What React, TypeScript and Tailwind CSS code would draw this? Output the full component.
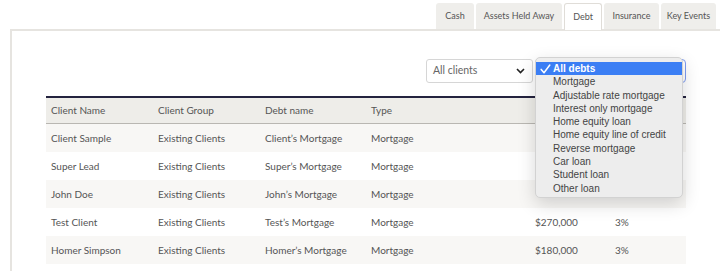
import React from "react";

type Row = {
  name: string;
  group: string;
  debt: string;
  type: string;
  balance: string;
  rate: string;
};

const tabs = [
  { label: "Cash", w: "w-[38px]" },
  { label: "Assets Held Away", w: "w-[86px]" },
  { label: "Debt", w: "w-[38px]" },
  { label: "Insurance", w: "w-[55px]" },
  { label: "Key Events", w: "w-[55px]" },
];

// first rows' amounts sit under the open dropdown in the screenshot
const rows: Row[] = [
  { name: "Client Sample", group: "Existing Clients", debt: "Client’s Mortgage", type: "Mortgage", balance: "", rate: "" },
  { name: "Super Lead", group: "Existing Clients", debt: "Super’s Mortgage", type: "Mortgage", balance: "", rate: "" },
  { name: "John Doe", group: "Existing Clients", debt: "John’s Mortgage", type: "Mortgage", balance: "", rate: "" },
  { name: "Test Client", group: "Existing Clients", debt: "Test’s Mortgage", type: "Mortgage", balance: "$270,000", rate: "3%" },
  { name: "Homer Simpson", group: "Existing Clients", debt: "Homer’s Mortgage", type: "Mortgage", balance: "$180,000", rate: "3%" },
];

const debtTypes = [
  "All debts",
  "Mortgage",
  "Adjustable rate mortgage",
  "Interest only mortgage",
  "Home equity loan",
  "Home equity line of credit",
  "Reverse mortgage",
  "Car loan",
  "Student loan",
  "Other loan",
];

function Chevron() {
  return (
    <svg width="9" height="6" viewBox="0 0 9 6" fill="none">
      <path d="M1 1l3.5 3.5L8 1" stroke="#222" strokeWidth="1.6" />
    </svg>
  );
}

function Check() {
  return (
    <svg width="11" height="10" viewBox="0 0 11 10" fill="none">
      <path d="M1.2 5.4l2.8 3.4L9.8 1" stroke="#fff" strokeWidth="1.5" strokeLinecap="round" strokeLinejoin="round" />
    </svg>
  );
}

function DebtMenu() {
  return (
    <div className="absolute left-[535px] top-[57px] w-[148px] h-[141px] rounded-[5px] border border-[#d2d2d2] bg-[#ededed] pt-[4px] shadow-[0_6px_18px_rgba(0,0,0,0.16)] font-['Liberation_Sans',sans-serif] text-[10px] leading-[13.3px] text-[#444]">
      {debtTypes.map((t, i) =>
        i === 0 ? (
          <div key={t} className="flex items-center h-[13.3px] bg-[#3b7ef4] text-white font-bold">
            <span className="w-[17px] pl-[4px] flex items-center">
              <Check />
            </span>
            <span>{t}</span>
          </div>
        ) : (
          <div key={t} className="h-[13.3px] pl-[17px]">
            {t}
          </div>
        )
      )}
    </div>
  );
}

export default function App() {
  return (
    <div className="relative w-[720px] h-[271px] overflow-hidden bg-white font-['Lato',sans-serif] text-[#555]">
      {/* tab strip */}
      <div className="flex justify-end items-end gap-[2px] pr-[4px] h-[30px]">
        {tabs.map((t) => (
          <div
            key={t.label}
            className={
              t.label === "Debt"
                ? `${t.w} h-[27px] flex items-center justify-center whitespace-nowrap rounded-t-[3px] border border-b-0 border-[#e0ddd8] bg-white text-[9px] text-[#555]`
                : `${t.w} h-[26px] mb-[1px] flex items-center justify-center whitespace-nowrap rounded-t-[3px] bg-[#efeeeb] text-[9px] text-[#555]`
            }
          >
            {t.label}
          </div>
        ))}
      </div>

      {/* panel */}
      <div className="-mt-[1px] ml-[10px] h-[245px] border-l-2 border-t-2 border-[#e6e4e0] pl-[34px] pr-[34px] pt-[28px]">
        <div className="flex justify-end gap-[2px]">
          <div className="w-[107px] h-[24px] flex items-center justify-between pl-[6px] pr-[7px] rounded-[3px] border border-[#d6d6d6] bg-white text-[10.5px] text-[#666]">
            <span>All clients</span>
            <Chevron />
          </div>
          <div className="w-[151px] h-[24px] rounded-[4px] border-[1.5px] border-[#7e9cf0] bg-white" />
        </div>

        <div className="mt-[13px] w-[640px] text-[10px]">
          <div className="grid grid-cols-[107px_107px_106px_164px_80px_76px] h-[28px] items-center border-t-2 border-b border-t-[#24233f] border-b-[#b9b7b2] bg-[#eeede9]">
            <div className="pl-[5px]">Client Name</div>
            <div className="pl-[5px]">Client Group</div>
            <div className="pl-[5px]">Debt name</div>
            <div className="pl-[5px]">Type</div>
            <div />
            <div />
          </div>
          {rows.map((r, i) => (
            <div
              key={r.name}
              className={
                i % 2 === 0
                  ? "grid grid-cols-[107px_107px_106px_164px_80px_76px] h-[28px] items-center bg-[#f8f7f5]"
                  : "grid grid-cols-[107px_107px_106px_164px_80px_76px] h-[28px] items-center bg-white"
              }
            >
              <div className="pl-[5px]">{r.name}</div>
              <div className="pl-[5px]">{r.group}</div>
              <div className="pl-[5px]">{r.debt}</div>
              <div className="pl-[5px]">{r.type}</div>
              <div className="pl-[5px]">{r.balance}</div>
              <div className="pl-[5px]">{r.rate}</div>
            </div>
          ))}
        </div>
      </div>

      <DebtMenu />
    </div>
  );
}
